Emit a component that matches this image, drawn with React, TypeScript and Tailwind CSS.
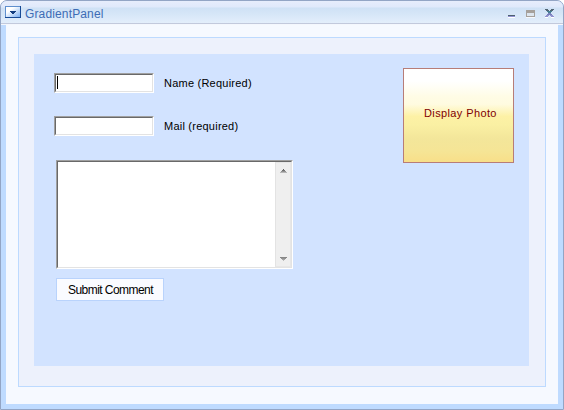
import React from "react";

function TitleBar() {
  return (
    <header className="flex h-[24px] shrink-0 items-start border-b border-[#f4f7fd] bg-[linear-gradient(to_bottom,#e7edfc_0px,#e0e9fb_6px,#cfe1f5_7px,#d7e7f8_14px,#e3eefb_22px,#c2c9dc_22px,#c2c9dc_23px)] pl-[4px]">
      <svg className="mt-[5px] shrink-0" width="16" height="12" viewBox="0 0 16 12" shapeRendering="crispEdges">
        <defs>
          <linearGradient id="menu" x1="0" y1="0" x2="1" y2="1">
            <stop offset="0.3" stopColor="#ffffff" />
            <stop offset="1" stopColor="#78adf2" />
          </linearGradient>
        </defs>
        <rect width="16" height="12" fill="#174a95" />
        <rect width="15" height="1" fill="#5f8fce" />
        <rect width="1" height="11" fill="#5f8fce" />
        <rect x="1" y="1" width="14" height="10" fill="url(#menu)" />
        <path d="M5 5h6v1h-1v1h-1v1h-2v-1h-1v-1h-1z" fill="#123d80" />
      </svg>
      <h1 className="ml-[4px] mt-[6px] whitespace-nowrap text-[12px] font-normal leading-[15px] tracking-[0.14px] text-[#3d6cb5]">
        GradientPanel
      </h1>
      <svg className="ml-auto mr-[9px] mt-[7px] shrink-0" width="47" height="10" viewBox="0 0 47 10" shapeRendering="crispEdges">
        <path d="M1 7h7v1h-7z" fill="#4c6070" />
        <path d="M1 8h7v1h-7z" fill="#9293d2" />
        <path d="M1 9h7v1h-7z" fill="#ffffff" />
        <path d="M19 2h9v7h-9z" fill="#a5a09b" />
        <path d="M20 5h7v3h-7z" fill="#dce5ee" />
        <path d="M19 9h9v1h-9z" fill="#f5f8fc" />
        <path d="M38 1h3v1h-3zM44 1h3v1h-3zM39 2h3v1h-3zM43 2h3v1h-3z" fill="#536675" />
        <path d="M40 3h5v1h-5zM41 4h3v1h-3z" fill="#467f93" />
        <path d="M41 5h3v1h-3zM40 6h5v1h-5z" fill="#777fbc" />
        <path d="M39 7h3v1h-3zM43 7h3v1h-3zM38 8h3v1h-3zM44 8h3v1h-3z" fill="#9192cf" />
        <path d="M38 9h3v1h-3zM44 9h3v1h-3z" fill="#ffffff" />
      </svg>
    </header>
  );
}

function SunkenField({ focused = false }: { focused?: boolean }) {
  return (
    <div className="h-[20px] w-[100px] shrink-0 border border-b-white border-l-[#a0a0a0] border-r-white border-t-[#a0a0a0]">
      <div className="h-full border border-b-[#e3e3e3] border-l-[#696969] border-r-[#e3e3e3] border-t-[#696969] bg-white pl-[1px] pt-[1px]">
        {focused && <div className="h-[13px] w-px bg-black" />}
      </div>
    </div>
  );
}

function FormRow({ label, focused }: { label: string; focused?: boolean }) {
  return (
    <label className="flex h-[20px] items-center gap-[10px] whitespace-nowrap text-[11px] leading-[13px] tracking-[0.23px] text-black">
      <SunkenField focused={focused} />
      <span className="pt-px">{label}</span>
    </label>
  );
}

function ScrollBar() {
  return (
    <div className="flex w-[16px] flex-col items-center justify-between border border-b-[#e7e7e7] border-l-[#e3e3e3] border-r-[#e7e7e7] border-t-[#e7e7e7] bg-[#efefef] pb-[5px] pl-px pt-[6px]">
      <svg width="7" height="4" viewBox="0 0 7 4" shapeRendering="crispEdges">
        <path d="M3 0h1v1h-1z" fill="#606060" />
        <path d="M2 1h3v1h-3z" fill="#707070" />
        <path d="M1 2h5v1h-5z" fill="#929292" />
        <path d="M0 3h7v1h-7z" fill="#b7b7b7" />
      </svg>
      <svg width="7" height="4" viewBox="0 0 7 4" shapeRendering="crispEdges">
        <path d="M0 0h7v1h-7z" fill="#888888" />
        <path d="M1 1h5v1h-5z" fill="#929292" />
        <path d="M2 2h3v1h-3z" fill="#a5a5a5" />
        <path d="M3 3h1v1h-1z" fill="#bdbdbd" />
      </svg>
    </div>
  );
}

function CommentBox() {
  return (
    <div className="ml-[2px] h-[109px] w-[237px] border border-b-white border-l-[#a0a0a0] border-r-white border-t-[#a0a0a0]">
      <div className="flex h-full justify-end border border-b-[#e3e3e3] border-l-[#696969] border-r-[#e3e3e3] border-t-[#696969] bg-white">
        <ScrollBar />
      </div>
    </div>
  );
}

export default function App() {
  return (
    <div className="h-[410px] w-[564px] bg-white font-['Liberation_Sans',Arial,sans-serif]">
      <div className="flex h-full flex-col overflow-hidden rounded-t-[7px] border border-[#93a5c5] bg-[#bfdbff]">
        <TitleBar />
        <main className="mx-[5px] mb-[5px] flex-1 bg-[#f6f9ff] px-[12px] pb-[17px] pt-[12px]">
          <div className="h-full border border-[#bddaff] bg-[#edf1fc] px-[15px] pb-[20px] pt-[16px]">
            <section className="flex h-full w-[495px] items-start justify-between bg-[#d2e3ff] pl-[20px] pr-[15px]">
              <div className="pt-[19px]">
                <FormRow label="Name (Required)" focused />
                <div className="h-[23px]" />
                <FormRow label="Mail (required)" />
                <div className="h-[24px]" />
                <CommentBox />
                <button className="ml-[2px] mt-[9px] block h-[23px] w-[108px] whitespace-nowrap border border-[#b9d3fc] bg-[#fafbff] pl-[11px] pt-px text-left text-[12px] leading-[20px] tracking-[-0.55px] text-black">
                  Submit Comment
                </button>
              </div>
              <div className="mt-[14px] h-[95px] w-[111px] whitespace-nowrap border border-[#b77d78] bg-[linear-gradient(to_bottom,#ffffff_0%,#ffffff_13%,#fffce5_30%,#fffbe0_38%,#fdf1a5_51%,#faf0a3_60%,#f3e69a_75%,#f5e596_88%,#f8df89_100%)] pl-[20px] pt-[37px] text-[11px] leading-[14px] tracking-[0.38px] text-[#800000]">
                Display Photo
              </div>
            </section>
          </div>
        </main>
      </div>
    </div>
  );
}
